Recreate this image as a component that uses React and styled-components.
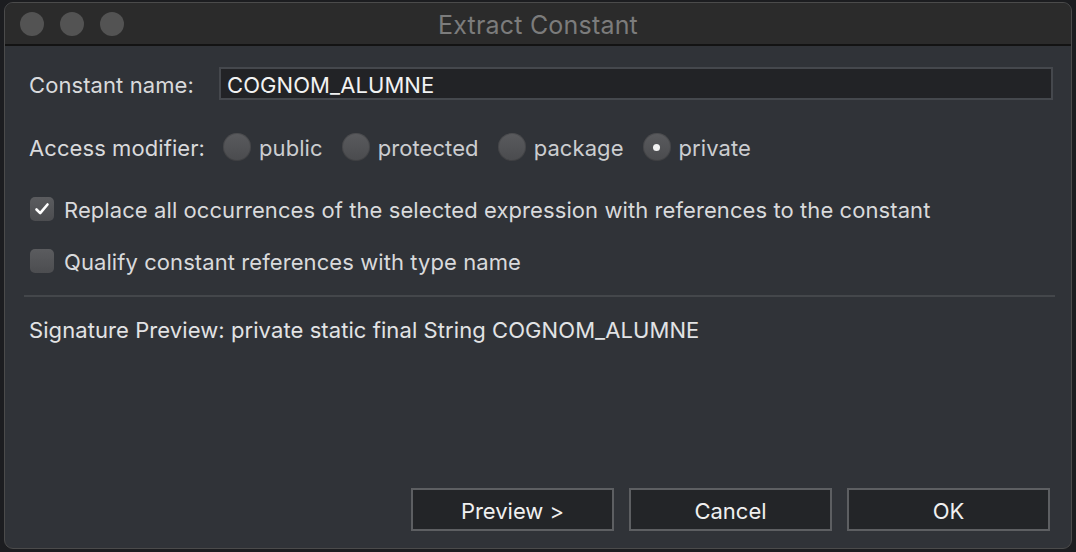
import React from "react";
import styled, { createGlobalStyle } from "styled-components";

const GlobalStyle = createGlobalStyle`
  html, body {
    margin: 0;
    padding: 0;
    background: #1c1d20;
  }
  * {
    box-sizing: border-box;
  }
`;

const Screen = styled.div`
  width: 1076px;
  height: 552px;
  padding: 2px 4px 3px 4px;
  background: #1c1d20;
  font-family: Inter, "Noto Sans", sans-serif;
`;

const Window = styled.div`
  height: 100%;
  display: flex;
  flex-direction: column;
  border: 1px solid #4b4b4b;
  border-radius: 9px;
  overflow: hidden;
  background: #303338;
`;

const TitleBar = styled.div`
  position: relative;
  height: 43px;
  flex-shrink: 0;
  display: flex;
  align-items: center;
  justify-content: center;
  background: #2b2b2b;
  border-bottom: 2px solid #131313;
`;

const Lights = styled.div`
  position: absolute;
  left: 15px;
  top: 9px;
  display: flex;
  gap: 16px;
`;

const Light = styled.span`
  width: 24px;
  height: 24px;
  border-radius: 50%;
  background: #535353;
`;

const Title = styled.div`
  font-size: 25px;
  color: #7c7c7c;
  letter-spacing: 0.2px;
  margin-top: 2px;
`;

const Body = styled.div`
  flex: 1;
  display: flex;
  flex-direction: column;
  padding: 21px 16px 17px 19px;
  color: #d9dadc;
  font-size: 22px;
  letter-spacing: 0.08px;
`;

const Row = styled.div`
  display: flex;
  align-items: center;
  height: ${(p) => p.$h}px;
  margin-top: ${(p) => p.$top || 0}px;
  padding-left: 5px;
`;

const Label = styled.span`
  width: ${(p) => (p.$w ? `${p.$w}px` : "auto")};
  margin-right: ${(p) => p.$mr || 0}px;
  white-space: nowrap;
  padding-top: 2px;
`;

const NameInput = styled.div`
  flex: 1;
  height: 33px;
  display: flex;
  align-items: center;
  padding: 2px 0 0 6px;
  background: #222326;
  border: 2px solid #45484d;
  color: #f2f2f2;
  margin-right: 2px;
`;

const Options = styled.div`
  display: flex;
  align-items: center;
  gap: 19px;
`;

const Option = styled.label`
  display: flex;
  align-items: center;
  gap: 8px;
  color: #cbcdd0;
`;

const OptionText = styled.span`
  padding-top: 2px;
`;

const Radio = styled.span`
  width: 28px;
  height: 28px;
  border-radius: 50%;
  background: linear-gradient(#5a5b5e, #4a4b4e);
  box-shadow: inset 0 0 0 1px rgba(0, 0, 0, 0.15);
  display: flex;
  align-items: center;
  justify-content: center;
  &::after {
    content: "";
    width: 7px;
    height: 7px;
    border-radius: 50%;
    background: #f2f2f2;
    display: ${(p) => (p.$on ? "block" : "none")};
  }
`;

const Check = styled.span`
  width: 24px;
  height: 24px;
  margin-left: 1px;
  margin-right: 10px;
  border-radius: 5px;
  background: linear-gradient(#5b5c5f, #4c4d50);
  display: flex;
  align-items: center;
  justify-content: center;
`;

const Separator = styled.div`
  height: 2px;
  margin-top: 22px;
  background: #44474b;
`;

const Signature = styled.div`
  margin-top: 21px;
  padding-left: 5px;
  line-height: 24px;
  color: #e2e3e5;
`;

const Buttons = styled.div`
  margin-top: auto;
  display: flex;
  justify-content: flex-end;
  gap: 15px;
  padding-right: 5px;
`;

const Button = styled.button`
  width: 203px;
  height: 43px;
  background: #232528;
  border: 2px solid #5d5f62;
  color: #f0f0f0;
  font-family: inherit;
  font-size: 22px;
  padding: 2px 0 0;
`;

function CheckBox({ checked, children }) {
  return (
    <Row $h={24} $top={checked ? 36 : 28}>
      <Check>
        {checked && (
          <svg width="16" height="16" viewBox="0 0 16 16">
            <path
              d="M2.5 8.5 L6.2 12.2 L13.5 3.5"
              fill="none"
              stroke="#ffffff"
              strokeWidth="2.6"
              strokeLinecap="round"
              strokeLinejoin="round"
            />
          </svg>
        )}
      </Check>
      <Label>{children}</Label>
    </Row>
  );
}

export default function App() {
  const modifiers = ["public", "protected", "package", "private"];
  return (
    <Screen>
      <GlobalStyle />
      <Window>
        <TitleBar>
          <Lights>
            <Light />
            <Light />
            <Light />
          </Lights>
          <Title>Extract Constant</Title>
        </TitleBar>
        <Body>
          <Row $h={33}>
            <Label $w={190}>Constant name:</Label>
            <NameInput>COGNOM_ALUMNE</NameInput>
          </Row>
          <Row $h={28} $top={33}>
            <Label $mr={18}>Access modifier:</Label>
            <Options>
              {modifiers.map((m) => (
                <Option key={m}>
                  <Radio $on={m === "private"} />
                  <OptionText>{m}</OptionText>
                </Option>
              ))}
            </Options>
          </Row>
          <CheckBox checked>
            Replace all occurrences of the selected expression with references to the constant
          </CheckBox>
          <CheckBox>Qualify constant references with type name</CheckBox>
          <Separator />
          <Signature>Signature Preview: private static final String COGNOM_ALUMNE</Signature>
          <Buttons>
            <Button>Preview &gt;</Button>
            <Button>Cancel</Button>
            <Button>OK</Button>
          </Buttons>
        </Body>
      </Window>
    </Screen>
  );
}
